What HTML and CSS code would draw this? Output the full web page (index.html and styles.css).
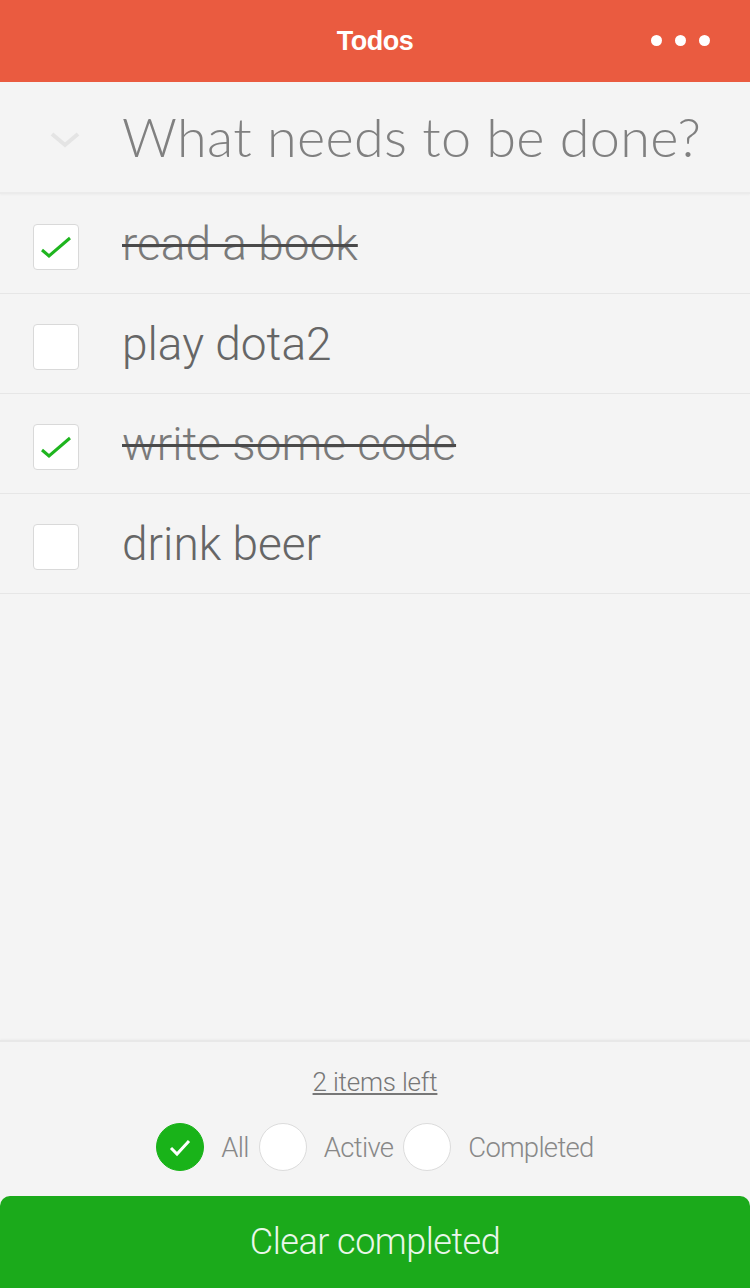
FILE: index.html
```html
<!DOCTYPE html>
<html>
<head>
<meta charset="utf-8">
<link rel="stylesheet" href="styles.css">
</head>
<body>
<div class="app">
  <header class="topbar">
    <h1 class="title">Todos</h1>
    <div class="more"><span></span><span></span><span></span></div>
  </header>
  <section class="entry">
    <svg class="toggle-all" width="32" height="20" viewBox="0 0 32 20"><polyline points="3,4 16,15 29,4" fill="none" stroke="#e4e4e4" stroke-width="4"/></svg>
    <div class="placeholder">What needs to be done?</div>
  </section>
  <ul class="list">
    <li class="item done">
      <span class="box"><svg width="46" height="46" viewBox="0 0 46 46"><polyline points="9,26 16,32 37,14" fill="none" stroke="#1fb51f" stroke-width="3"/></svg></span>
      <span class="label">read a book</span>
    </li>
    <li class="item">
      <span class="box"></span>
      <span class="label">play dota2</span>
    </li>
    <li class="item done">
      <span class="box"><svg width="46" height="46" viewBox="0 0 46 46"><polyline points="9,26 16,32 37,14" fill="none" stroke="#1fb51f" stroke-width="3"/></svg></span>
      <span class="label">write some code</span>
    </li>
    <li class="item">
      <span class="box"></span>
      <span class="label">drink beer</span>
    </li>
  </ul>
  <div class="spacer"></div>
  <footer class="footer">
    <div class="count">2 items left</div>
    <div class="filters">
      <span class="radio on"><svg width="48" height="48" viewBox="0 0 48 48"><polyline points="15,25 21,31 33,18" fill="none" stroke="#fff" stroke-width="3"/></svg></span>
      <span class="flabel">All</span>
      <span class="radio"></span>
      <span class="flabel">Active</span>
      <span class="radio"></span>
      <span class="flabel">Completed</span>
    </div>
    <button class="clear">Clear completed</button>
  </footer>
</div>
</body>
</html>
```

FILE: styles.css
```css
* { box-sizing: border-box; }
html, body { margin: 0; padding: 0; }
body {
  width: 750px;
  height: 1288px;
  background: #f4f4f4;
  font-family: "Liberation Sans", Arial, sans-serif;
  overflow: hidden;
}
.app {
  display: flex;
  flex-direction: column;
  height: 1288px;
}
.topbar {
  height: 82px;
  background: #ea5b40;
  display: flex;
  align-items: center;
  justify-content: center;
  position: relative;
  flex-shrink: 0;
}
.title {
  margin: 0;
  color: #fff;
  font-size: 27px;
  font-weight: bold;
  letter-spacing: -0.5px;
  font-family: "Liberation Sans", Arial, sans-serif;
}
.more {
  position: absolute;
  right: 40px;
  top: 35px;
  display: flex;
  gap: 13px;
}
.more span {
  width: 11px;
  height: 11px;
  border-radius: 50%;
  background: #fff;
}
.entry {
  height: 112px;
  display: flex;
  align-items: center;
  border-bottom: 2px solid #ebebeb;
  box-shadow: 0 1px 2px rgba(0,0,0,0.03);
  flex-shrink: 0;
}
.toggle-all {
  margin-left: 49px;
  margin-right: 41px;
  margin-top: 6px;
}
.placeholder {
  font-family: "Lato", "Liberation Sans", sans-serif;
  font-weight: 300;
  font-size: 54px;
  color: #808080;
  letter-spacing: 0.3px;
  margin-top: -2px;
}
.list {
  list-style: none;
  margin: 0;
  padding: 0;
}
.item {
  height: 100px;
  border-bottom: 1px solid #e6e6e6;
  display: flex;
  align-items: center;
}
.box {
  width: 46px;
  height: 46px;
  margin-left: 33px;
  margin-right: 43px;
  margin-top: 7px;
  background: #fff;
  border: 1px solid #d9d9d9;
  border-radius: 4px;
  position: relative;
  flex-shrink: 0;
}
.box svg {
  position: absolute;
  left: -1px;
  top: -1px;
}
.label {
  font-family: "Roboto", "Liberation Sans", sans-serif;
  font-weight: 300;
  font-size: 46px;
  color: #666;
  margin-top: 1px;
}
.item.done .label {
  text-decoration: line-through;
  text-decoration-color: #4a4a4a;
  text-decoration-thickness: 3px;
  color: #7a7a7a;
}
.spacer { flex: 1; }
.footer {
  border-top: 2px solid #e8e8e8;
  box-shadow: 0 -1px 2px rgba(0,0,0,0.03);
  display: flex;
  flex-direction: column;
  align-items: center;
  flex-shrink: 0;
}
.count {
  margin-top: 24px;
  font-family: "Roboto", "Liberation Sans", sans-serif;
  font-weight: 300;
  font-size: 26px;
  color: #777;
  text-decoration: underline;
  letter-spacing: -0.2px;
  line-height: 32px;
}
.filters {
  display: flex;
  align-items: center;
  margin-top: 25px;
  margin-left: 10px;
  height: 48px;
}
.radio {
  width: 48px;
  height: 48px;
  border-radius: 50%;
  background: #fff;
  border: 1px solid #dcdcdc;
  flex-shrink: 0;
}
.radio.on {
  background: #19b319;
  border-color: #19b319;
}
.radio svg { display: block; margin: -1px; }
.flabel {
  font-family: "Roboto", "Liberation Sans", sans-serif;
  font-weight: 300;
  font-size: 27.5px;
  color: #888;
  letter-spacing: -0.7px;
  margin: 0 10px 0 17px;
}
.clear {
  margin-top: 25px;
  width: 750px;
  height: 92px;
  border: none;
  border-radius: 10px 10px 0 0;
  background: #1baa1b;
  color: #eaf7ea;
  font-family: "Roboto", "Liberation Sans", sans-serif;
  font-weight: 300;
  font-size: 36px;
  letter-spacing: -0.5px;
  padding: 0;
}
```
